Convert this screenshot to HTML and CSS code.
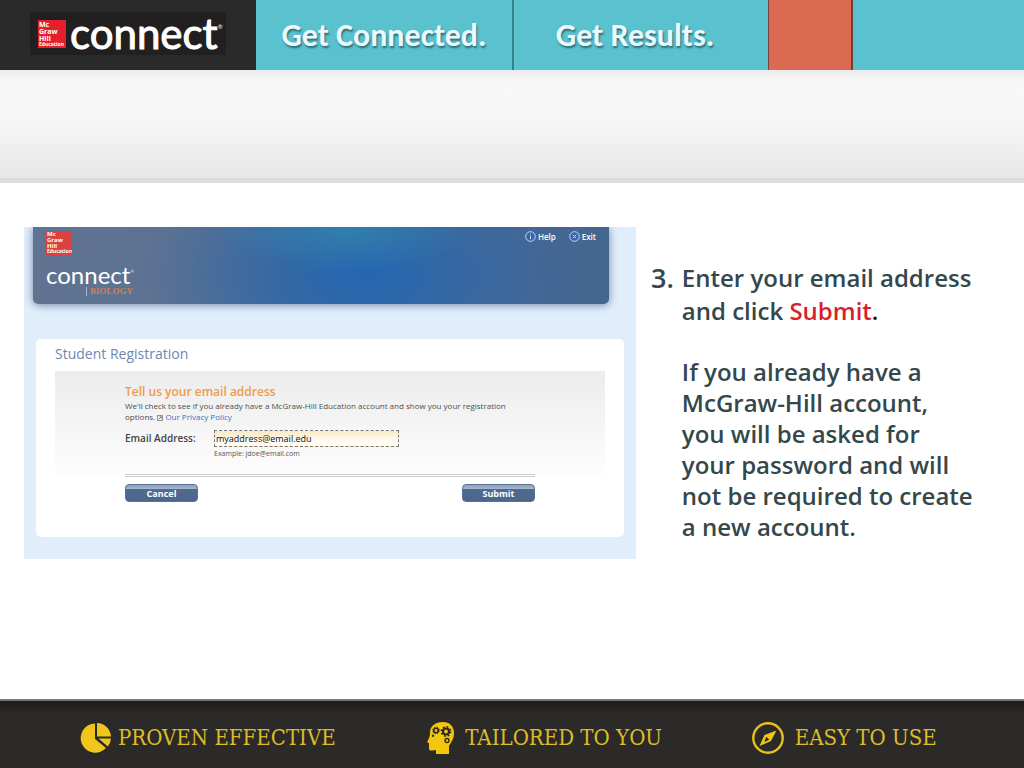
FILE: index.html
```html
<!DOCTYPE html>
<html lang="en">
<head>
<meta charset="utf-8">
<meta name="viewport" content="width=device-width, initial-scale=1">
<title>Connect – Student Registration</title>
<link rel="stylesheet" href="styles.css">
</head>
<body>
<header class="top">
  <div class="brand">
    <div class="brand-box">
      <div class="mgh"><span>Mc</span><span>Graw</span><span>Hill</span><span class="mgh-small">Education</span></div>
      <div class="wordmark">connect<sup class="reg">®</sup></div>
    </div>
  </div>
  <div class="slogan">Get Connected.</div>
  <div class="slogan slogan-edge">Get Results.</div>
  <div class="coral"></div>
  <div class="teal"></div>
</header>
<div class="band"></div>
<main class="content">
  <section class="app">
    <div class="app-header">
      <div class="app-brand">
        <div class="mgh mgh-app"><span>Mc</span><span>Graw</span><span>Hill</span><span class="mgh-small">Education</span></div>
        <div class="wordmark wordmark-app">connect<sup class="reg">®</sup></div>
        <div class="subject">BIOLOGY</div>
      </div>
      <nav class="app-nav">
        <a href="#help"><svg class="nav-icon" viewBox="0 0 11 11"><circle cx="5.500" cy="5.500" r="4.800"/><path d="M5.500 4.600v3.600M5.500 2.500v1"/></svg>Help</a>
        <a href="#exit"><svg class="nav-icon" viewBox="0 0 11 11"><circle cx="5.500" cy="5.500" r="4.800"/><path d="M3.900 3.700l3.200 3.600M7.100 3.700L3.900 7.300"/></svg>Exit</a>
      </nav>
    </div>
    <form class="card">
      <h1 class="card-title">Student Registration</h1>
      <div class="panel">
        <h2 class="panel-title">Tell us your email address</h2>
        <p class="panel-text">We'll check to see if you already have a McGraw-Hill Education account and show you your registration options. <svg class="ext-icon" viewBox="0 0 7 7"><path d="M.5.500h6v6h-6zM2 5l3-3M3 2h2v2"/></svg> <a href="#privacy">Our Privacy Policy</a></p>
        <div class="field">
          <label for="email">Email Address:</label>
          <div class="field-main">
            <input id="email" type="text" value="myaddress@email.edu">
            <span class="hint">Example: jdoe@email.com</span>
          </div>
        </div>
      </div>
      <div class="actions">
        <button type="button">Cancel</button>
        <button type="button">Submit</button>
      </div>
    </form>
  </section>
  <section class="steps">
    <span class="num">3.</span>
    <div class="step-text">
      <p class="lead">Enter your email address<br>and click <span class="red">Submit</span><span class="black">.</span></p>
      <p class="note">If you already have a<br>McGraw-Hill account,<br>you will be asked for<br>your password and will<br>not be required to create<br>a new account.</p>
    </div>
  </section>
</main>
<footer class="foot">
  <div class="claim">
    <svg class="claim-icon" viewBox="0 0 32 32"><path fill="#f0c61c" d="M15 1.500V17l11 9A14.600 14.600 0 1 1 15 1.500z"/><path fill="#f0c61c" d="M17 1a14.500 14.500 0 0 1 14 13.500H17zM18.500 16.500H31a14 14 0 0 1-3.200 8z"/></svg>
    <span>PROVEN EFFECTIVE</span>
  </div>
  <div class="claim">
    <svg class="claim-icon" viewBox="0 0 32 32"><path fill="#f5c70c" d="M16 0C8 0 3 4 3 11c0 2-.2 3.300-1 5L.5 19.500c-.4.900 0 1.500 1.500 1.500v5c0 2 1 2.700 3 2.500l4-.5v4h13v-7c0-3 5-6.500 5-13.500C27 4.500 23 0 16 0z"/><g fill="none" stroke="#2b2a28"><circle cx="9" cy="8.500" r="2.200" stroke-width="1.600"/><circle cx="9" cy="8.500" r="3.400" stroke-width="1" stroke-dasharray="1.300 1.370"/><circle cx="19" cy="9.500" r="3" stroke-width="2.200"/><circle cx="19" cy="9.500" r="4.700" stroke-width="1.500" stroke-dasharray="1.800 1.890"/><circle cx="20" cy="18.500" r="2" stroke-width="1.400"/></g><circle cx="6" cy="13.800" r="1.200" fill="#2b2a28"/></svg>
    <span>TAILORED TO YOU</span>
  </div>
  <div class="claim claim-wide">
    <svg class="claim-icon" viewBox="0 0 32 32"><circle cx="16" cy="16" r="14.700" fill="none" stroke="#e5c21d" stroke-width="2.400"/><path fill="#f0c61c" d="M24.500 8.500L19 19 7.500 24 12.500 13z"/><path fill="#2b2a28" d="M14.300 14.800l3 3-5 2.300z"/></svg>
    <span>EASY TO USE</span>
  </div>
</footer>
</body>
</html>
```
FILE: styles.css
```css
* { box-sizing: border-box; }
body {
  margin: 0;
  min-height: 100vh;
  display: flex;
  flex-direction: column;
  background: #fff;
  font-family: "Open Sans", "Noto Sans", sans-serif;
}
h1, h2, p { margin: 0; }
a { text-decoration: none; }

.top {
  display: grid;
  grid-template-columns: minmax(0, 3fr) minmax(0, 3fr) minmax(0, 3fr) minmax(0, 1fr) minmax(0, 2fr);
  height: 70px;
}
.brand { background: #2a2a2a; padding: 12px 30px; }
.brand-box {
  height: 43px;
  display: flex;
  align-items: center;
  gap: 4px;
  padding: 0 8px;
  background: #211f20;
}
.mgh {
  width: 28px;
  height: 28px;
  flex: none;
  display: flex;
  flex-direction: column;
  padding: 1px 1px 0;
  background: #e4202c;
  color: #fff;
  font-size: 7px;
  line-height: 7px;
  font-weight: 700;
}
.mgh-small { font-size: 5px; line-height: 5px; }
.wordmark {
  color: #fff;
  font-family: Lato, sans-serif;
  font-size: 42px;
  line-height: 42px;
  padding-bottom: 2px;
  white-space: nowrap;
  -webkit-text-stroke: 1px #fff;
}
.reg { font-size: 6px; line-height: 6px; vertical-align: 20px; -webkit-text-stroke: 0; }
.slogan {
  display: flex;
  align-items: center;
  justify-content: center;
  background: #5ac1cf;
  color: #e9f9fd;
  font-family: Carlito, Lato, sans-serif;
  font-size: 32px;
  font-weight: 700;
  text-shadow: 1px 2px 2px #2c6d78;
}
.slogan-edge { border-left: 2px solid #37818a; padding-right: 12px; }
.coral { background: #dc6a53; border-left: 1px solid #77453c; border-right: 2px solid #713f37; }
.teal { background: #5ac1cf; }

.band {
  height: 113px;
  background: linear-gradient(#ececec, #f8f8f8 12%, #f7f7f7 40%, #e8e8e8);
  border-bottom: 5px solid #dcdcdc;
}

.content {
  flex: 1;
  display: grid;
  grid-template-columns: minmax(0, 612fr) minmax(0, 349fr);
  gap: 15px;
  align-items: start;
  padding: 44px 24px 24px;
}
.app { background: #e0eefb; padding: 0 12px 22px; }
.app-header {
  height: 77px;
  margin: 0 15px 35px -3px;
  display: flex;
  justify-content: space-between;
  padding: 4px 13px 0;
  border-radius: 0 0 5px 5px;
  background:
    radial-gradient(ellipse 130px 45px at 54% 0, #3080ae, transparent),
    radial-gradient(ellipse 220px 130px at 58% 60%, #2567b4, #3267a5 35%, transparent),
    linear-gradient(90deg, #607391, #5b7193 40%, #43658f);
  box-shadow: 0 1px 8px #7186a5;
  clip-path: inset(0 -9px -16px -9px);
}
.app-brand { width: 92px; }
.mgh-app {
  width: 26px;
  height: 25px;
  padding: 0 1px;
  background: #d9423f;
  font-size: 6px;
  line-height: 6px;
}
.mgh-app .mgh-small { font-size: 5px; }
.wordmark-app {
  font-size: 24px;
  line-height: 24px;
  margin-top: 7px;
  padding-bottom: 0;
  -webkit-text-stroke: 0;
}
.wordmark-app .reg { font-size: 4px; line-height: 4px; vertical-align: 11px; }
.subject {
  margin-left: 40px;
  padding-left: 3px;
  border-left: 1px solid #a9b4c5;
  color: #cf805c;
  font-family: "Liberation Serif", serif;
  font-size: 9px;
  line-height: 9px;
  font-weight: 700;
}
.app-nav { display: flex; gap: 13px; height: 11px; }
.app-nav a {
  display: flex;
  align-items: center;
  gap: 2px;
  color: #fff;
  font-size: 8px;
  line-height: 11px;
  font-weight: 600;
}
.nav-icon { width: 11px; height: 11px; fill: #3763ad; stroke: #c6d8f5; stroke-width: 1; }

.card { background: #fff; border-radius: 5px; padding: 6px 19px 35px; }
.card-title { color: #6d87b0; font-size: 14px; line-height: 18px; font-weight: 400; }
.panel {
  margin-top: 8px;
  padding: 13px 70px;
  background: linear-gradient(#ececec, #fdfdfd);
}
.panel-title { color: #ef9b48; font-size: 12px; line-height: 16px; font-weight: 600; }
.panel-text { color: #4d4d4d; font-size: 8px; line-height: 11px; }
.panel-text a { color: #2b78c8; }
.ext-icon { width: 6px; height: 6px; fill: none; stroke: #777; stroke-width: 1; vertical-align: -1px; }
.field { display: flex; margin-top: 8px; }
.field label { width: 89px; color: #444; font-size: 10px; line-height: 16px; font-weight: 600; }
.field-main { display: flex; flex-direction: column; }
.field input {
  width: 185px;
  height: 17px;
  padding: 0 1px;
  border: 1px dashed #777;
  background: linear-gradient(#fbe9c2, #fffdf7 70%);
  color: #111;
  font-family: inherit;
  font-size: 9px;
}
.hint { color: #555; font-size: 7px; line-height: 14px; }
.actions {
  display: flex;
  justify-content: space-between;
  margin: 0 70px;
  padding-top: 7px;
  border-top: 3px double #ccc;
}
.actions button {
  width: 73px;
  height: 18px;
  padding: 0;
  border: 1px solid #58719a;
  border-radius: 4px;
  background: linear-gradient(#8d9fba, #a9b7cb 25%, #4f6b90 26%, #4b668a);
  color: #fff;
  font-family: inherit;
  font-size: 9px;
  font-weight: 700;
}

.steps {
  display: flex;
  gap: 8px;
  padding-top: 34px;
  color: #34484c;
  font-size: 24px;
  font-weight: 600;
}
.num { font-size: 27px; line-height: 33px; }
.lead { line-height: 33px; }
.note { margin-top: 29px; line-height: 31px; }
.red { color: #d91f2c; }
.black { color: #111; }

.foot {
  height: 69px;
  display: grid;
  grid-template-columns: 347fr 324fr 272fr;
  align-items: center;
  padding: 6px 0 0 80px;
  border-top: 2px solid #777;
  background: linear-gradient(#1c1b1a, #2b2a29 20%);
}
.claim { display: flex; align-items: center; gap: 6px; color: #dcbc28; white-space: nowrap; }
.claim-wide { gap: 11px; }
.claim span {
  font-family: "DejaVu Serif Condensed", "DejaVu Serif", serif;
  font-size: 22px;
  line-height: 30px;
}
.claim-icon { width: 32px; height: 32px; flex: none; }
```
